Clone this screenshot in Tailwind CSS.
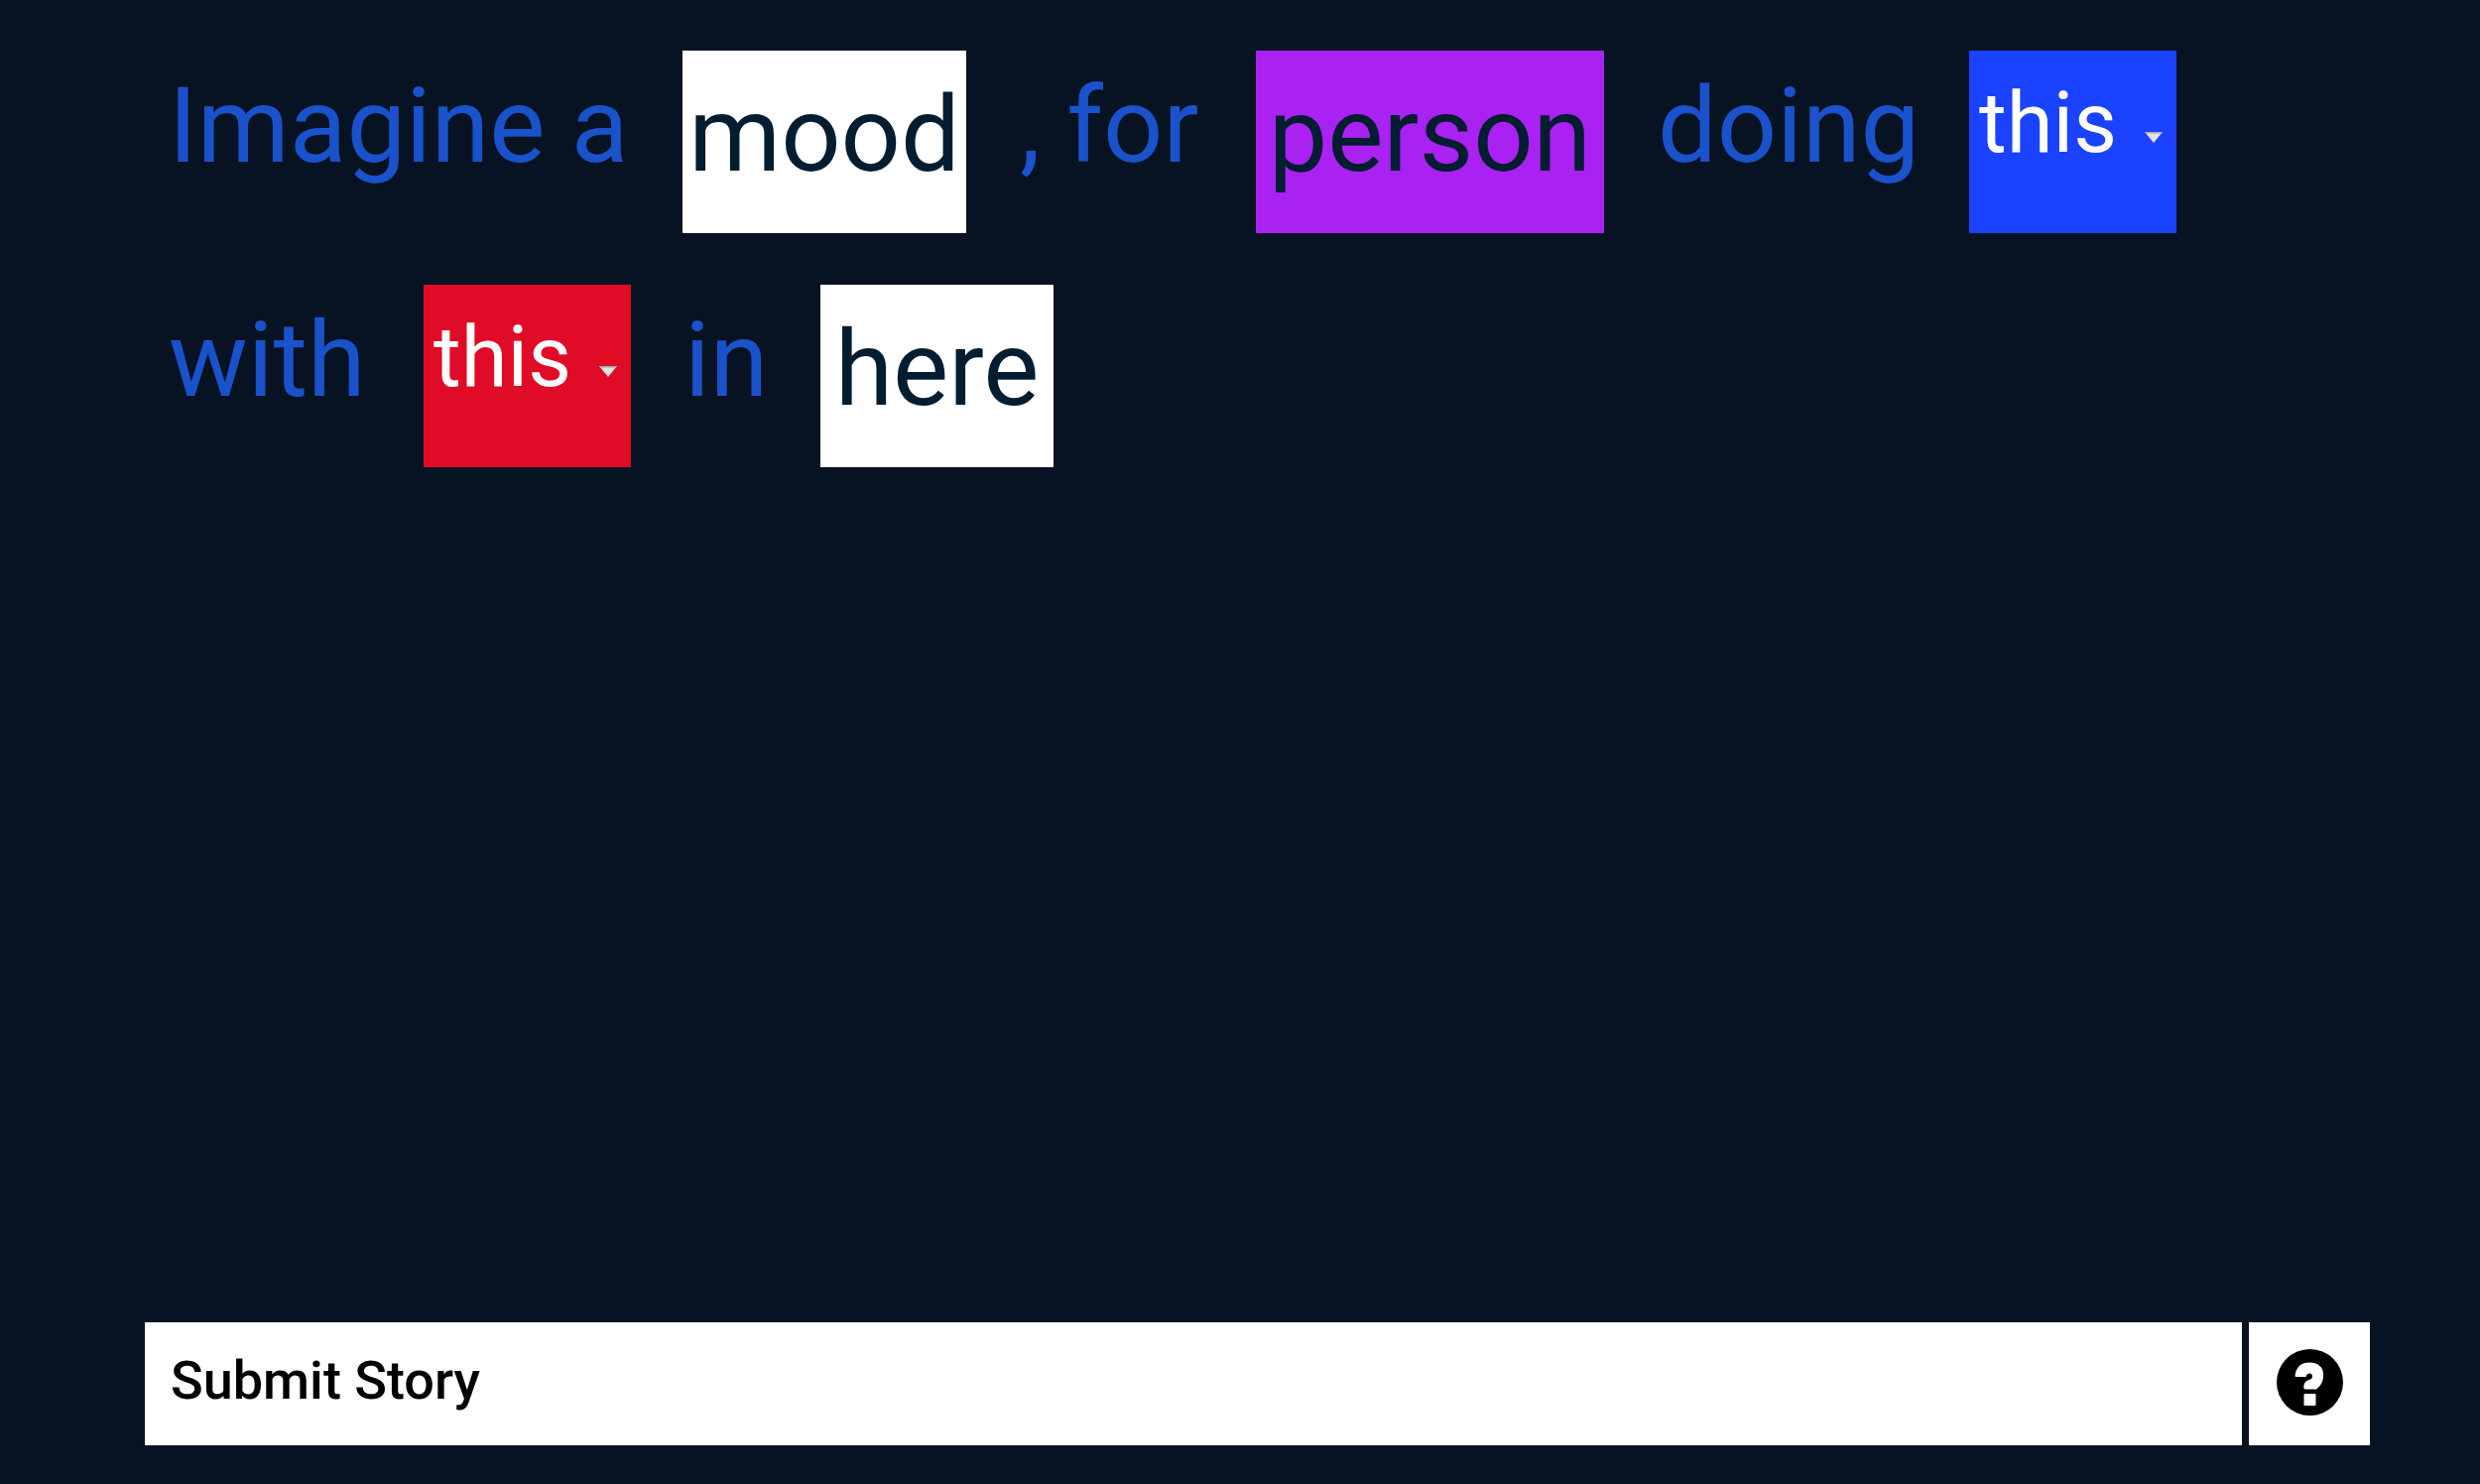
<!DOCTYPE html>
<html lang="en">
<head>
    <meta charset="UTF-8">
    <meta name="viewport" content="width=device-width, initial-scale=1.0">
    <title>Story Builder</title>
    <script src="https://cdn.jsdelivr.net/npm/@tailwindcss/browser@4"></script>
</head>
<body class="min-h-screen flex flex-col justify-between bg-[#071322] pl-[146px] pr-[111px] pt-[51px] pb-[39px] font-[Roboto,sans-serif]">
    <!-- Story sentence -->
    <form id="story" class="flex flex-wrap items-start gap-x-[54px] gap-y-[52px] pl-6 text-[106px] leading-[152px] text-[#1a52cc] whitespace-nowrap">
        <span class="w-[464px]">Imagine a</span>
        <input type="text" aria-label="Mood" placeholder="mood" class="w-[286px] h-[184px] pb-3.5 text-center bg-white text-[#021c30] placeholder:text-[#021c30] outline-none">
        <span class="w-[184px]">, for</span>
        <input type="text" aria-label="Person" placeholder="person" class="w-[351px] h-[184px] pb-3.5 text-center bg-[#a922f2] text-[#021c30] placeholder:text-[#021c30] outline-none">
        <span class="w-[260px]">doing</span>
        <div class="relative">
            <select aria-label="Action" class="block appearance-none w-[209px] h-[184px] pl-2.5 pb-[38px] bg-[#1b42ff] text-white text-[85px] leading-[144px] outline-none">
                <option>this</option>
            </select>
            <svg class="absolute right-3.5 top-[82px] w-[18px] h-[11px] pointer-events-none" viewBox="0 0 18 11"><path d="M0 0H18L9 11Z" fill="#e2e2e2"/><path d="M0 0H18L17 1.5H1Z" fill="#a8a8a8"/></svg>
        </div>
        <span class="w-[203px]">with</span>
        <div class="relative">
            <select aria-label="Object" class="block appearance-none w-[209px] h-[184px] pl-2.5 pb-[38px] bg-[#e00b26] text-white text-[85px] leading-[144px] outline-none">
                <option>this</option>
            </select>
            <svg class="absolute right-3.5 top-[82px] w-[18px] h-[11px] pointer-events-none" viewBox="0 0 18 11"><path d="M0 0H18L9 11Z" fill="#e2e2e2"/><path d="M0 0H18L17 1.5H1Z" fill="#a8a8a8"/></svg>
        </div>
        <span class="w-[83px]">in</span>
        <input type="text" aria-label="Place" placeholder="here" class="w-[235px] h-[184px] pb-3.5 text-center bg-white text-[#021c30] placeholder:text-[#021c30] outline-none">
    </form>

    <!-- Bottom bar -->
    <div class="flex gap-[7px]">
        <button type="submit" form="story" class="flex-1 h-[124px] pl-[26px] pb-2 bg-white text-left text-[54px] font-medium text-black">Submit Story</button>
        <button type="button" aria-label="Help" class="flex items-center justify-center w-[122px] h-[124px] pb-1 bg-white text-black">
            <svg class="w-[67px] h-[67px]" viewBox="0 0 67 67">
                <circle cx="33.5" cy="33.5" r="33.5" fill="currentColor"/>
                <path d="M19.5 28Q18.5 28 18.6 26.500C19.500 18 25 13.500 33 13.500C41.500 13.500 47 18 47 25V27C47 33 44 37.500 40 40.500H29Q27.300 40.500 27.300 38.500C27.300 34.500 29 32 32.500 31C35 30.500 36 29.300 36 27.500C36 25.500 34.700 24.500 33 24.500C31.200 24.500 30.500 25.300 29.500 28Z" fill="#fff"/>
                <rect x="27.5" y="45" width="12" height="12" rx="1" fill="#fff"/>
            </svg>
        </button>
    </div>
</body>
</html>
